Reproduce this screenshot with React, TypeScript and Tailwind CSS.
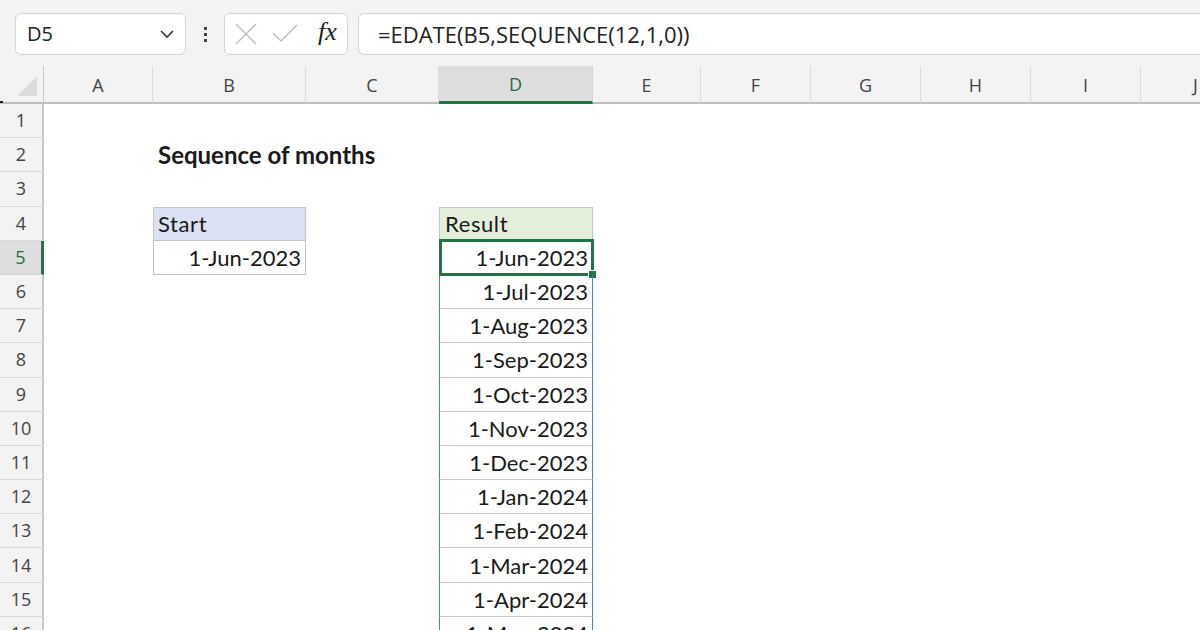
import type { ReactNode } from "react";

const cols = [
  { key: "A", w: 109 },
  { key: "B", w: 153 },
  { key: "C", w: 133 },
  { key: "D", w: 154 },
  { key: "E", w: 108 },
  { key: "F", w: 110 },
  { key: "G", w: 110 },
  { key: "H", w: 110 },
  { key: "I", w: 110 },
  { key: "J", w: 110 },
];

const results = [
  "1-Jun-2023",
  "1-Jul-2023",
  "1-Aug-2023",
  "1-Sep-2023",
  "1-Oct-2023",
  "1-Nov-2023",
  "1-Dec-2023",
  "1-Jan-2024",
  "1-Feb-2024",
  "1-Mar-2024",
  "1-Apr-2024",
  "1-May-2024",
];

const cellFont = "font-['Lato','Liberation_Sans',sans-serif] text-[22px] text-[#1a1a1a]";

const Cell = ({ row, col }: { row: number; col: string }) => {
  let className = "h-full box-border relative flex items-center";
  let content: ReactNode = null;

  if (col === "B" && row === 2) {
    content = <span className="pl-[5px] font-bold text-[24px] whitespace-nowrap">Sequence of months</span>;
  }
  if (col === "B" && row === 4) {
    className += " bg-[#d9e1f2] border border-[#c4c4c4]";
    content = <span className="pl-[4px] tracking-[0.6px]">Start</span>;
  }
  if (col === "B" && row === 5) {
    className += " border-x border-b border-[#c4c4c4] justify-end";
    content = <span className="pr-[4px]">1-Jun-2023</span>;
  }
  if (col === "D" && row === 4) {
    className += " bg-[#e2efda] border border-[#c4c4c4]";
    content = <span className="pl-[5px] tracking-[0.6px]">Result</span>;
  }
  if (col === "D" && row >= 5) {
    className += " justify-end border-x border-b border-x-[#4f7bd3] border-b-[#c8c8c8]";
    content = <span className="pr-[4px]">{results[row - 5]}</span>;
  }

  return (
    <div className={className}>
      {content}
      {col === "D" && row === 5 && (
        <>
          <div className="absolute -left-[1px] -top-[2px] -right-[2px] -bottom-[2px] border-[3px] border-[#217346] pointer-events-none" />
          <div className="absolute -right-[5px] -bottom-[5px] w-[9px] h-[9px] bg-[#217346] border border-white" />
        </>
      )}
    </div>
  );
};

export default function App() {
  const rows = Array.from({ length: 16 }, (_, i) => i + 1);
  const gridCols = "grid-cols-[44px_109px_153px_133px_154px_108px_110px_110px_110px_110px_110px]";

  return (
    <div className="w-[1200px] h-[630px] overflow-hidden bg-white relative">
      {/* Formula bar */}
      <div className="h-[66px] bg-[#f3f3f3] flex items-start pt-[13px] pl-[15px] font-['Open_Sans','Noto_Sans',sans-serif]">
        <div className="w-[171px] h-[42px] bg-white border border-[#d4d4d4] rounded-[6px] flex items-center justify-between pl-[11px] pr-[10px] shrink-0">
          <span className="text-[20px] text-[#222]">D5</span>
          <svg width="16" height="10" viewBox="0 0 16 10">
            <path d="M2 2 L8 8 L14 2" fill="none" stroke="#333" strokeWidth="1.6" />
          </svg>
        </div>
        <div className="w-[38px] h-[42px] flex flex-col items-center justify-center gap-[3px] shrink-0">
          <div className="w-[3px] h-[3px] bg-[#444]" />
          <div className="w-[3px] h-[3px] bg-[#444]" />
          <div className="w-[3px] h-[3px] bg-[#444]" />
        </div>
        <div className="w-[124px] h-[42px] bg-white border border-[#d4d4d4] rounded-[6px] flex items-center pl-[9px] shrink-0">
          <svg width="24" height="24" viewBox="0 0 24 24">
            <path d="M2 2 L22 22 M22 2 L2 22" stroke="#bdbdbd" strokeWidth="1.4" fill="none" />
          </svg>
          <svg width="26" height="20" viewBox="0 0 26 20" className="ml-[14px]">
            <path d="M1 9 L9 17 L25 1" stroke="#bdbdbd" strokeWidth="1.4" fill="none" />
          </svg>
          <span className="ml-[20px] font-['Liberation_Serif',serif] italic text-[26px] leading-none text-[#222] -mt-[4px]">fx</span>
        </div>
        <div className="ml-[10px] flex-1 h-[42px] bg-white border border-[#d4d4d4] border-r-0 rounded-l-[6px] flex items-center pl-[19px]">
          <span className="text-[22px] text-[#222]">=EDATE(B5,SEQUENCE(12,1,0))</span>
        </div>
      </div>

      {/* Column headers */}
      <div className={`grid ${gridCols} h-[38px] bg-[#f3f3f3] font-['Open_Sans','Noto_Sans',sans-serif] text-[18px] text-[#444]`}>
        <div className="relative border-r border-b-[2px] border-r-[#c8c8c8] border-b-[#bdbdbd]">
          <div className="absolute right-[6px] bottom-[6px] w-0 h-0 border-l-[20px] border-l-transparent border-b-[20px] border-b-[#dcdcdc]" />
        </div>
        {cols.map((c) =>
          c.key === "D" ? (
            <div key={c.key} className="flex items-center justify-center bg-[#dedede] border-b-[3px] border-b-[#217346] border-r border-r-[#d4d4d4] text-[#1e6b41] pt-[2px]">
              {c.key}
            </div>
          ) : (
            <div key={c.key} className="flex items-center justify-center border-b-[2px] border-b-[#bdbdbd] border-r border-r-[#dadada] pt-[2px]">
              {c.key}
            </div>
          )
        )}
      </div>
      <div className="absolute left-0 top-[101px] w-[3px] h-[2px] bg-[#222]" />

      {/* Sheet rows */}
      <div className={`grid ${gridCols} auto-rows-[34.2px] ${cellFont}`}>
        {rows.map((r) => (
          <div key={r} className="contents">
            <div
              className={
                r === 5
                  ? "flex items-center justify-center bg-[#dedede] border-r-[3px] border-r-[#217346] border-b border-b-[#d4d4d4] font-['Open_Sans','Noto_Sans',sans-serif] text-[18px] text-[#1e6b41]"
                  : "flex items-center justify-center bg-[#f3f3f3] border-r-[2px] border-r-[#c8c8c8] border-b border-b-[#d8d8d8] font-['Open_Sans','Noto_Sans',sans-serif] text-[18px] text-[#444]"
              }
            >
              {r}
            </div>
            {cols.map((c) => (
              <Cell key={c.key} row={r} col={c.key} />
            ))}
          </div>
        ))}
      </div>
    </div>
  );
}
